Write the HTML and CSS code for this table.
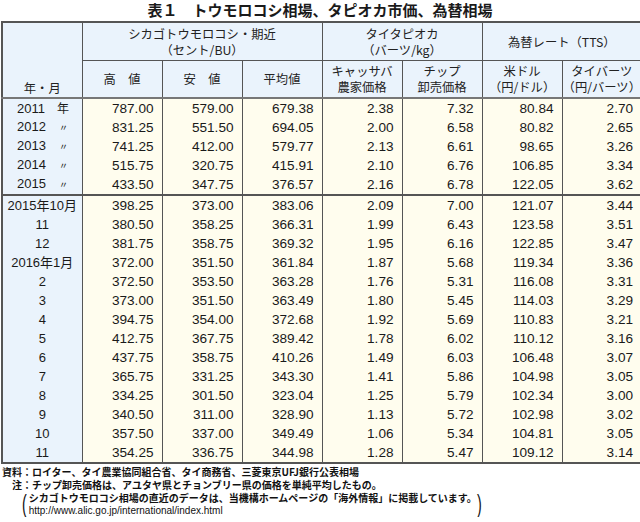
FILE: index.html
```html
<!DOCTYPE html>
<html lang="ja">
<head>
<meta charset="utf-8">
<link rel="stylesheet" href="styles.css">
</head>
<body>
<h1 class="title">表１　トウモロコシ相場、タピオカ市価、為替相場</h1>
<table class="tbl">
  <colgroup>
    <col class="c"><col class="c"><col class="c"><col class="c"><col class="c"><col class="c"><col class="c"><col class="c">
  </colgroup>
  <thead>
    <tr class="h1">
      <th rowspan="2" class="ym">年・月</th>
      <th colspan="3">シカゴトウモロコシ・期近<br>（セント/BU）</th>
      <th colspan="2">タイタピオカ<br>（バーツ/kg）</th>
      <th colspan="2" class="fx">為替レート（TTS）</th>
    </tr>
    <tr class="h2">
      <th>高　値</th>
      <th>安　値</th>
      <th>平均値</th>
      <th>キャッサバ<br>農家価格</th>
      <th>チップ<br>卸売価格</th>
      <th class="up">米ドル<br>（円/ドル）</th>
      <th class="up">タイバーツ<br>（円/バーツ）</th>
    </tr>
  </thead>
  <tbody class="years">
    <tr><td class="lab yl"><span class="yr">2011</span><span class="mk">年</span></td><td>787.00</td><td>579.00</td><td>679.38</td><td>2.38</td><td>7.32</td><td>80.84</td><td>2.70</td></tr>
    <tr><td class="lab yl"><span class="yr">2012</span><span class="mk small">〃</span></td><td>831.25</td><td>551.50</td><td>694.05</td><td>2.00</td><td>6.58</td><td>80.82</td><td>2.65</td></tr>
    <tr><td class="lab yl"><span class="yr">2013</span><span class="mk small">〃</span></td><td>741.25</td><td>412.00</td><td>579.77</td><td>2.13</td><td>6.61</td><td>98.65</td><td>3.26</td></tr>
    <tr><td class="lab yl"><span class="yr">2014</span><span class="mk small">〃</span></td><td>515.75</td><td>320.75</td><td>415.91</td><td>2.10</td><td>6.76</td><td>106.85</td><td>3.34</td></tr>
    <tr><td class="lab yl"><span class="yr">2015</span><span class="mk small">〃</span></td><td>433.50</td><td>347.75</td><td>376.57</td><td>2.16</td><td>6.78</td><td>122.05</td><td>3.62</td></tr>
  </tbody>
  <tbody class="months">
    <tr><td class="lab">2015年10月</td><td>398.25</td><td>373.00</td><td>383.06</td><td>2.09</td><td>7.00</td><td>121.07</td><td>3.44</td></tr>
    <tr><td class="lab">11</td><td>380.50</td><td>358.25</td><td>366.31</td><td>1.99</td><td>6.43</td><td>123.58</td><td>3.51</td></tr>
    <tr><td class="lab">12</td><td>381.75</td><td>358.75</td><td>369.32</td><td>1.95</td><td>6.16</td><td>122.85</td><td>3.47</td></tr>
    <tr><td class="lab">2016年1月</td><td>372.00</td><td>351.50</td><td>361.84</td><td>1.87</td><td>5.68</td><td>119.34</td><td>3.36</td></tr>
    <tr><td class="lab">2</td><td>372.50</td><td>353.50</td><td>363.28</td><td>1.76</td><td>5.31</td><td>116.08</td><td>3.31</td></tr>
    <tr><td class="lab">3</td><td>373.00</td><td>351.50</td><td>363.49</td><td>1.80</td><td>5.45</td><td>114.03</td><td>3.29</td></tr>
    <tr><td class="lab">4</td><td>394.75</td><td>354.00</td><td>372.68</td><td>1.92</td><td>5.69</td><td>110.83</td><td>3.21</td></tr>
    <tr><td class="lab">5</td><td>412.75</td><td>367.75</td><td>389.42</td><td>1.78</td><td>6.02</td><td>110.12</td><td>3.16</td></tr>
    <tr><td class="lab">6</td><td>437.75</td><td>358.75</td><td>410.26</td><td>1.49</td><td>6.03</td><td>106.48</td><td>3.07</td></tr>
    <tr><td class="lab">7</td><td>365.75</td><td>331.25</td><td>343.30</td><td>1.41</td><td>5.86</td><td>104.98</td><td>3.05</td></tr>
    <tr><td class="lab">8</td><td>334.25</td><td>301.50</td><td>323.04</td><td>1.25</td><td>5.79</td><td>102.34</td><td>3.00</td></tr>
    <tr><td class="lab">9</td><td>340.50</td><td>311.00</td><td>328.90</td><td>1.13</td><td>5.72</td><td>102.98</td><td>3.02</td></tr>
    <tr><td class="lab">10</td><td>357.50</td><td>337.00</td><td>349.49</td><td>1.06</td><td>5.34</td><td>104.81</td><td>3.05</td></tr>
    <tr><td class="lab">11</td><td>354.25</td><td>336.75</td><td>344.98</td><td>1.28</td><td>5.47</td><td>109.12</td><td>3.14</td></tr>
  </tbody>
</table>
<div class="notes">
  <div class="note"><span class="nk">資料：</span><span>ロイター、タイ農業協同組合省、タイ商務省、三菱東京UFJ銀行公表相場</span></div>
  <div class="note"><span class="nk">注：</span><span>チップ卸売価格は、アユタヤ県とチョンブリー県の価格を単純平均したもの。</span></div>
  <div class="paren">
    <span class="pl">(</span>
    <div class="pbody">
      <div>シカゴトウモロコシ相場の直近のデータは、当機構ホームページの「海外情報」に掲載しています。</div>
      <div class="url">http://www.alic.go.jp/international/index.html</div>
    </div>
    <span class="pr">)</span>
  </div>
</div>
</body>
</html>
```
FILE: styles.css
```css
html, body {
  margin: 0;
  padding: 0;
  background: #ffffff;
}
body {
  width: 640px;
  font-family: "Liberation Sans", "Noto Sans CJK JP", sans-serif;
  color: #1a1a1a;
}
.title {
  margin: 0;
  height: 21px;
  line-height: 20px;
  font-size: 15px;
  font-weight: bold;
  text-align: center;
  font-family: "Noto Sans CJK JP", sans-serif;
}
.tbl {
  margin-left: 1px;
  width: 637px;
  border-collapse: collapse;
  table-layout: fixed;
  border: 2px solid #555;
}
.c { width: 80px; }
.tbl th {
  background: #eaf3fc;
  border: 1px solid #555;
  font-weight: normal;
  font-size: 12.3px;
  line-height: 16px;
  font-family: "Noto Sans CJK JP", sans-serif;
  color: #222;
  padding: 0;
  text-align: center;
  vertical-align: middle;
}
.tbl .h1 th { height: 37px; }
.tbl .h2 th { height: 36px; }
.tbl .h2 th, .tbl .ym { border-bottom: 2px solid #777; }
.tbl .ym { vertical-align: bottom; padding-bottom: 1px; }
.tbl .fx { height: 20px; }
.tbl td {
  background: #fffdee;
  border-left: 1px solid #555;
  border-right: 1px solid #555;
  font-size: 13.6px;
  text-align: right;
  padding: 0 8px 0 0;
  height: 19px;
  line-height: 18px;
}
.tbl td.lab {
  background: #eaf3fc;
  text-align: center;
  padding: 0;
  font-size: 13px;
}
.tbl td.yl { text-align: left; padding-left: 14px; }
.yr { display: inline-block; width: 40px; }
.mk { font-family: "Noto Sans CJK JP", sans-serif; font-size: 12px; }
.mk.small { font-size: 9px; position: relative; left: 2px; }
.months tr:first-child td { border-top: 2px solid #555; }
.notes {
  padding: 1px 0 0 1px;
  font-family: "Noto Sans CJK JP", sans-serif;
  font-size: 10px;
  line-height: 13px;
  font-weight: bold;
  color: #111;
}
.note { display: flex; }
.nk { display: inline-block; width: 31px; text-align: right; }
.paren {
  display: flex;
  align-items: center;
  padding-left: 19px;
}
.pl, .pr {
  font-family: "Liberation Sans", sans-serif;
  font-weight: normal;
  font-size: 26px;
  line-height: 26px;
  transform: scaleX(0.55);
}
.pr { margin-left: -2px; }
.url { font-family: "Liberation Sans", sans-serif; font-weight: normal; }
```
